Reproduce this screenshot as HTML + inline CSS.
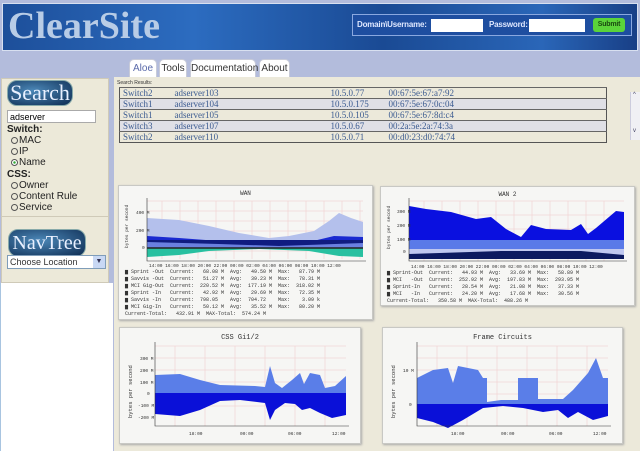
<!DOCTYPE html>
<html><head><meta charset="utf-8"><style>
*{margin:0;padding:0;box-sizing:border-box}
body{width:640px;height:451px;overflow:hidden;background:#b3bcdc;font-family:"Liberation Sans",sans-serif;position:relative}
.a{position:absolute}
.banner{left:2px;top:3px;width:636px;height:48px;background:linear-gradient(90deg,#1d4f9a,#2c6cc0 30%,#1a4a94 60%,#2a66b8 85%,#183f86);border:1px solid #d8e0f0}
.logo{left:8px;top:4px;font-family:"Liberation Serif",serif;font-size:38px;font-weight:bold;color:#b8cce6}
.login{left:352px;top:14px;width:280px;height:22px;background:#1e4ea0;border:1px solid #8aa8e0;font-size:8px;font-weight:bold;color:#dfe8ff;letter-spacing:-0.2px}
.login input{position:absolute;height:13px;border:0;background:#fff;top:4px}
.tab{top:59px;height:19px;background:#fff;border:1px solid #c8cbd8;border-bottom:0;border-radius:5px 5px 0 0;font-size:10px;color:#333;text-align:center;line-height:18px}
.main{left:114px;top:77px;width:526px;height:374px;background:#ece9da}
.side{left:1px;top:78px;width:108px;height:205px;background:#ece9d9;border:1px solid #cfcab8}
.white{left:0;top:283px;width:113px;height:168px;background:#fff;border-left:1px solid #a8c4e0}
.badge{background:radial-gradient(ellipse at 40% 40%,#4c88b8,#0c2a50);color:#e8f0ff;font-family:"Liberation Serif",serif;border-radius:10px;border:1px solid #8aa;text-align:center}
.sl{font-size:10px;color:#222;position:absolute;left:6px}
.rb{display:inline-block;width:7px;height:7px;border:1px solid #555;border-radius:50%;margin-right:1px;vertical-align:-1px}
table{border-collapse:collapse;font-family:"Liberation Serif",serif;font-size:9px;color:#3a5a90}
td{height:11px;border-top:1px solid #666;padding-left:3px;white-space:nowrap}
tr:nth-child(even){background:#e0e0e6}
.gbox{background:#f6f6f4;border:1px solid #c8c8c4;box-shadow:1px 1px 2px #aaa}
.gt{font-family:"Liberation Mono",monospace;font-size:6px;color:#333;text-align:center;position:absolute;width:100%}
.lg{font-family:"Liberation Mono",monospace;font-size:5px;color:#333;position:absolute;white-space:pre;line-height:7px}
</style></head><body>
<div class="a banner"></div>
<div class="a logo">ClearSite</div>
<div class="a login"><span class="a" style="left:4px;top:5px">Domain\Username:</span><input style="left:78px;width:52px"><span class="a" style="left:136px;top:5px">Password:</span><input style="left:176px;width:56px"><div class="a" style="left:240px;top:3px;width:32px;height:14px;background:#5bd33a;border-radius:3px;color:#1a4a10;font-size:7px;text-align:center;line-height:14px">Submit</div></div>

<div class="a tab" style="left:129px;width:28px;color:#5a6aaa">Aloe</div>
<div class="a tab" style="left:159px;width:28px">Tools</div>
<div class="a tab" style="left:190px;width:66px">Documentation</div>
<div class="a tab" style="left:259px;width:31px">About</div>

<div class="a main"></div>
<div class="a side">
 <div class="a badge" style="left:5px;top:1px;width:66px;height:26px;font-size:22px;line-height:24px">Search</div>
 <input class="a" style="left:5px;top:31px;width:89px;height:13px;border:1px solid #aaa;font-size:9px;padding-left:2px" value="adserver">
 <div class="sl" style="left:5px;top:45px;font-weight:bold">Switch:</div>
 <div class="sl" style="left:9px;top:56px"><span class="rb"></span>MAC</div>
 <div class="sl" style="left:9px;top:67px"><span class="rb"></span>IP</div>
 <div class="sl" style="left:9px;top:78px"><span class="rb" style="background:radial-gradient(#3a3 30%,#fff 40%)"></span>Name</div>
 <div class="sl" style="left:5px;top:90px;font-weight:bold">CSS:</div>
 <div class="sl" style="left:9px;top:101px"><span class="rb"></span>Owner</div>
 <div class="sl" style="left:9px;top:112px"><span class="rb"></span>Content Rule</div>
 <div class="sl" style="left:9px;top:123px"><span class="rb"></span>Service</div>
 <div class="a" style="left:0;top:137px;width:106px;height:1px;background:#cfcab8"></div>
 <div class="a badge" style="left:6px;top:150px;width:78px;height:28px;font-size:20px;line-height:26px">NavTree</div>
 <div class="a" style="left:5px;top:176px;width:99px;height:14px;background:#fff;border:1px solid #7f9db9;font-size:9px;line-height:12px;padding-left:2px;color:#333">Choose Location<span class="a" style="right:0;top:0;width:12px;height:12px;background:#c8d8f4;font-size:7px;text-align:center;color:#335">▼</span></div>
</div>
<div class="a white"></div>

<div class="a" style="left:117px;top:80px;font-size:5px;color:#333">Search Results:</div>
<table class="a" style="left:119px;top:87px;width:488px;border:1px solid #555">
<tr><td style="width:52px">Switch2</td><td style="width:156px">adserver103</td><td style="width:58px">10.5.0.77</td><td>00:67:5e:67:a7:92</td></tr>
<tr><td>Switch1</td><td>adserver104</td><td>10.5.0.175</td><td>00:67:5e:67:0c:04</td></tr>
<tr><td>Switch1</td><td>adserver105</td><td>10.5.0.105</td><td>00:67:5e:67:8d:c4</td></tr>
<tr><td>Switch3</td><td>adserver107</td><td>10.5.0.67</td><td>00:2a:5e:2a:74:3a</td></tr>
<tr><td>Switch2</td><td>adserver110</td><td>10.5.0.71</td><td>00:d0:23:d0:74:74</td></tr>
</table>
<div class="a" style="left:630px;top:92px;width:10px;height:48px;background:#f0f0f4;border-left:1px solid #ccd"><div style="font-size:6px;color:#446;padding-left:2px">^</div><div style="font-size:6px;color:#446;padding-left:2px;margin-top:30px">v</div></div>

<!-- WAN -->
<div class="a gbox" style="left:118px;top:185px;width:255px;height:135px">
<div class="gt" style="top:4px">WAN</div>
<svg class="a" style="left:0;top:0" width="255" height="135">
<g stroke="#f0c8c8" stroke-width=".5">
<path d="M28 15H244M28 25H244M28 35H244M28 45H244M28 55H244M28 65H244"/>
<path d="M43 15V73M61 15V73M79 15V73M97 15V73M115 15V73M133 15V73M151 15V73M169 15V73M187 15V73M205 15V73M223 15V73M241 15V73"/></g>
<polygon fill="#b4c0ec" points="28,32 60,34 90,40 120,47 150,52 170,50 195,45 210,35 220,27 232,32 244,36 244,62 28,62"/>
<polygon fill="#1a2ad0" points="28,50 60,52 100,55 130,58 160,58 190,56 215,50 244,51 244,62 28,62"/>
<polygon fill="#101c80" points="28,54 244,54 244,62 28,62"/>
<polygon fill="#6a80e0" points="28,56 100,58 160,60 244,57 244,62 28,62"/>
<polygon fill="#28c0a0" points="28,62 244,62 244,71 220,70 190,65 140,63 90,65 60,69 28,71"/>
<path d="M28 62H244" stroke="#222" stroke-width="1.5"/>
<path d="M28 12V75H247" stroke="#333" stroke-width=".6" fill="none"/>
<g font-family="Liberation Mono" font-size="4.5" fill="#333"><text x="17" y="28">400 M</text><text x="17" y="46">200 M</text><text x="23" y="63">0</text>
<text x="30" y="81">14:00 16:00 18:00 20:00 22:00 00:00 02:00 04:00 06:00 08:00 10:00 12:00</text>
<text transform="translate(9,62) rotate(-90)">bytes per second</text></g>
</svg>
<div class="lg" style="left:6px;top:83px">▆ Sprint -Out  Current:   68.08 M  Avg:   49.50 M  Max:   87.79 M
▆ Savvis -Out  Current:   51.27 M  Avg:   39.23 M  Max:   78.31 M
▆ MCI Gig-Out  Current:  220.52 M  Avg:  177.19 M  Max:  318.02 M
▆ Sprint -In   Current:   42.92 M  Avg:   29.69 M  Max:   72.35 M
▆ Savvis -In   Current:  798.05    Avg:  704.72    Max:    3.09 k
▆ MCI Gig-In   Current:   50.12 M  Avg:   35.52 M  Max:   80.20 M
Current-Total:   432.91 M  MAX-Total:  574.24 M</div>
</div>

<!-- WAN2 -->
<div class="a gbox" style="left:380px;top:186px;width:255px;height:120px">
<div class="gt" style="top:4px">WAN 2</div>
<svg class="a" style="left:0;top:0" width="255" height="120">
<g stroke="#f0c8c8" stroke-width=".5"><path d="M28 14H243M28 28H243M28 42H243M28 56H243M43 14V74M61 14V74M79 14V74M97 14V74M115 14V74M133 14V74M151 14V74M169 14V74M187 14V74M205 14V74M223 14V74"/></g>
<polygon fill="#0a10e0" points="28,19 45,22 70,25 95,32 110,30 125,42 140,50 150,38 165,42 190,43 200,37 207,47 215,41 235,24 243,25 243,62 28,62"/>
<polygon fill="#5a7ae8" points="28,53 243,53 243,64 28,64"/>
<polygon fill="#c0c8f0" points="28,62 243,62 243,68 28,68"/>
<polygon fill="#0c1a60" points="28,67 120,64 200,64 243,68 243,72 28,72"/>
<path d="M28 11V74H246" stroke="#333" stroke-width=".6" fill="none"/>
<g font-family="Liberation Mono" font-size="4.5" fill="#333"><text x="16" y="26">300 M</text><text x="16" y="40">200 M</text><text x="16" y="54">100 M</text><text x="22" y="66">0</text>
<text x="30" y="81">14:00 16:00 18:00 20:00 22:00 00:00 02:00 04:00 06:00 08:00 10:00 12:00</text>
<text transform="translate(9,62) rotate(-90)">bytes per second</text></g>
</svg>
<div class="lg" style="left:6px;top:83px">▆ Sprint-Out  Current:   44.93 M  Avg:   33.69 M  Max:   58.89 M
▆ MCI   -Out  Current:  252.92 M  Avg:  197.83 M  Max:  293.95 M
▆ Sprint-In   Current:   28.54 M  Avg:   21.08 M  Max:   37.33 M
▆ MCI   -In   Current:   24.20 M  Avg:   17.68 M  Max:   30.56 M
Current-Total:   350.58 M  MAX-Total:  488.26 M</div>
</div>

<!-- CSS -->
<div class="a gbox" style="left:119px;top:327px;width:242px;height:117px">
<div class="gt" style="top:6px;font-size:7px">CSS Gi1/2</div>
<svg class="a" style="left:0;top:0" width="242" height="117">
<g stroke="#f0c8c8" stroke-width=".5"><path d="M35 18H226M35 30H226M35 42H226M35 54H226M35 66H226M35 78H226M55 18V98M85 18V98M115 18V98M145 18V98M175 18V98M205 18V98"/></g>
<polygon fill="#5a7ee8" points="35,47 60,46 80,52 100,57 135,58 145,59 150,38 155,55 162,60 172,52 180,45 184,56 190,45 200,47 205,60 215,58 226,48 226,65 35,65"/>
<polygon fill="#0a10d8" points="35,65 226,65 226,87 212,90 200,85 190,80 182,82 175,76 165,75 155,82 150,92 145,75 120,72 100,73 80,82 60,88 35,86"/>
<path d="M35 14V98H229" stroke="#333" stroke-width=".6" fill="none"/>
<g font-family="Liberation Mono" font-size="4.5" fill="#333"><text x="20" y="32">300 M</text><text x="20" y="44">200 M</text><text x="20" y="56">100 M</text><text x="27" y="67">0</text><text x="18" y="79">-100 M</text><text x="18" y="91">-200 M</text>
<text x="69" y="107">18:00</text><text x="120" y="107">00:00</text><text x="168" y="107">06:00</text><text x="212" y="107">12:00</text>
<text transform="translate(12,90) rotate(-90)" font-size="5.5">bytes per second</text></g>
</svg>
</div>

<!-- Frame -->
<div class="a gbox" style="left:382px;top:327px;width:241px;height:117px">
<div class="gt" style="top:6px;font-size:7px">Frame Circuits</div>
<svg class="a" style="left:0;top:0" width="241" height="117">
<g stroke="#f0c8c8" stroke-width=".5"><path d="M34 18H225M34 30H225M34 42H225M34 54H225M34 66H225M34 78H225M54 18V98M84 18V98M114 18V98M144 18V98M174 18V98M204 18V98"/></g>
<polygon fill="#5a7ee8" points="34,50 50,42 65,40 70,55 75,38 95,42 100,50 104,50 104,74 118,72 135,72 135,50 155,50 155,71 180,71 190,62 205,45 213,30 220,50 225,50 225,76 34,76"/>
<polygon fill="#0a10d8" points="34,76 225,76 225,88 210,92 195,84 185,90 175,82 160,84 140,80 120,78 100,80 80,92 65,100 50,94 34,90"/>
<path d="M34 14V98H228" stroke="#333" stroke-width=".6" fill="none"/>
<g font-family="Liberation Mono" font-size="4.5" fill="#333"><text x="20" y="44">10 M</text><text x="26" y="78">0</text>
<text x="68" y="107">18:00</text><text x="118" y="107">00:00</text><text x="166" y="107">06:00</text><text x="210" y="107">12:00</text>
<text transform="translate(12,90) rotate(-90)" font-size="5.5">bytes per second</text></g>
</svg>
</div>
</body></html>
